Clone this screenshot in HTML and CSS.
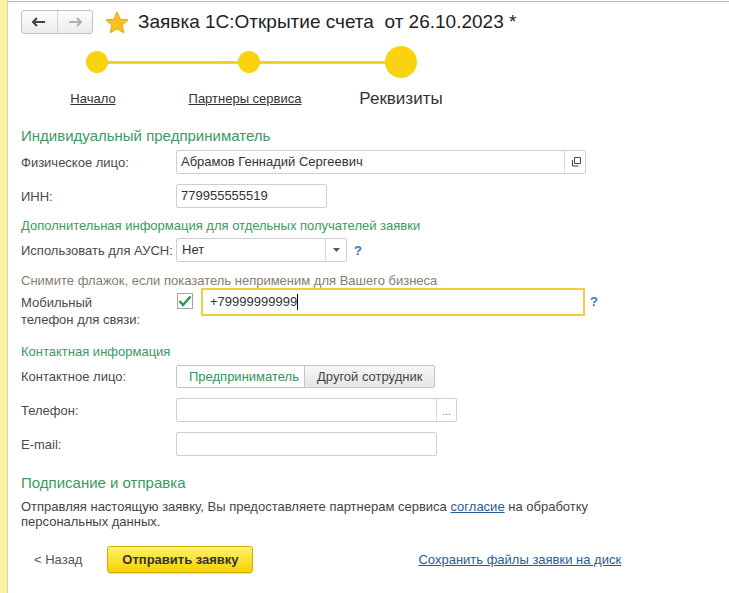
FILE: index.html
```html
<!DOCTYPE html>
<html lang="ru">
<head>
<meta charset="UTF-8">
<meta name="viewport" content="width=device-width, initial-scale=1.0">
<title>Заявка 1С:Открытие счета</title>
<link rel="stylesheet" href="styles.css">
</head>
<body>
<div class="page">
  <div class="strip"></div>
  <div class="main">
    <div class="topline"></div>
    <div class="content">

      <div class="header">
        <div class="nav">
          <span class="nav-btn">
            <svg width="14" height="10" viewBox="0 0 14 10"><path d="M1 5h12M5 1L1 5l4 4" stroke="#444" stroke-width="2" fill="none"/></svg>
          </span>
          <span class="nav-btn">
            <svg width="14" height="10" viewBox="0 0 14 10"><path d="M1 5h12M9 1l4 4-4 4" stroke="#b0b0b0" stroke-width="2" fill="none"/></svg>
          </span>
        </div>
        <svg class="star" width="24" height="23" viewBox="0 0 24 23"><path d="M12 1l3.2 7.2 7.8.7-5.9 5.2 1.8 7.7L12 17.8l-6.9 4 1.8-7.7L1 8.9l7.8-.7z" fill="#f6c21c" stroke="#e0a800" stroke-width="1"/></svg>
        <h1 class="title">Заявка 1С:Открытие счета&nbsp; от 26.10.2023 *</h1>
      </div>

      <div class="steps">
        <div class="step first">
          <span class="dot"></span>
          <a class="step-label" href="#">Начало</a>
        </div>
        <div class="step">
          <span class="dot"></span>
          <a class="step-label" href="#">Партнеры сервиса</a>
        </div>
        <div class="step last current">
          <span class="dot"></span>
          <span class="step-label">Реквизиты</span>
        </div>
      </div>

      <h2 class="section">Индивидуальный предприниматель</h2>

      <div class="row">
        <label class="label">Физическое лицо:</label>
        <div class="field w410">
          <span class="value">Абрамов Геннадий Сергеевич</span>
          <span class="field-btn">
            <svg width="11" height="11" viewBox="0 0 11 11"><path d="M4.5 .5h6v6h-6z M2.5 3v6h6" stroke="#444" fill="none"/></svg>
          </span>
        </div>
      </div>

      <div class="row">
        <label class="label">ИНН:</label>
        <div class="field w151"><span class="value">779955555519</span></div>
      </div>

      <h3 class="subsection">Дополнительная информация для отдельных получателей заявки</h3>

      <div class="row">
        <label class="label">Использовать для АУСН:</label>
        <div class="field w172 select">
          <span class="value">Нет</span>
          <span class="field-btn"><svg width="7" height="4" viewBox="0 0 7 4"><path d="M0 0h7L3.5 4z" fill="#555"/></svg></span>
        </div>
        <span class="help">?</span>
      </div>

      <p class="hint">Снимите флажок, если показатель неприменим для Вашего бизнеса</p>

      <div class="row mobile">
        <label class="label">Мобильный<br>телефон для связи:</label>
        <span class="check">
          <svg width="14" height="12" viewBox="0 0 14 12"><path d="M1.5 6l3.5 4L12.5 1.5" stroke="#22954f" stroke-width="2.4" fill="none"/></svg>
        </span>
        <div class="field focused">
          <span class="value">+79999999999</span><span class="caret"></span>
        </div>
        <span class="help">?</span>
      </div>

      <h3 class="subsection contact">Контактная информация</h3>

      <div class="row">
        <label class="label">Контактное лицо:</label>
        <div class="toggle">
          <span class="toggle-item on">Предприниматель</span>
          <span class="toggle-item">Другой сотрудник</span>
        </div>
      </div>

      <div class="row">
        <label class="label">Телефон:</label>
        <div class="field w282">
          <span class="value"></span>
          <span class="field-btn dots">...</span>
        </div>
      </div>

      <div class="row">
        <label class="label">E-mail:</label>
        <div class="field w261"><span class="value"></span></div>
      </div>

      <h2 class="section sign">Подписание и отправка</h2>
      <p class="text">Отправляя настоящую заявку, Вы предоставляете партнерам сервиса <a href="#">согласие</a> на обработку персональных данных.</p>

      <div class="actions">
        <a class="back" href="#">&lt; Назад</a>
        <button class="send" type="button">Отправить заявку</button>
        <a class="save" href="#">Сохранить файлы заявки на диск</a>
      </div>

    </div>
  </div>
</div>
</body>
</html>
```

FILE: styles.css
```css
/* Form page in 1C style */
body {
  margin: 0;
  font-family: "Liberation Sans", Arial, sans-serif;
  font-size: 13px;
  color: #4a4a4a;
  background: #fff;
}
.page {
  display: flex;
  min-height: 593px;
}
.strip {
  width: 7px;
  flex: none;
  background: #fcefa8;
  border-right: 1px solid #e6d788;
}
.main {
  flex: 1;
}
.topline {
  height: 1px;
  border-bottom: 1px solid #b9b9b9;
}
.content {
  padding: 8px 0 0 13px;
}

/* header */
.header {
  display: flex;
  align-items: center;
  height: 24px;
}
.nav {
  display: flex;
  width: 70px;
  height: 22px;
  border: 1px solid #c2c2c2;
  border-radius: 3px;
  background: linear-gradient(#fdfdfd, #ececec);
}
.nav-btn {
  flex: 1;
  display: flex;
  align-items: center;
  justify-content: center;
}
.nav-btn + .nav-btn {
  border-left: 1px solid #d0d0d0;
}
.star {
  margin-left: 12px;
}
.title {
  margin: 0 0 0 9px;
  font-size: 19px;
  font-weight: normal;
  color: #222;
}

/* steps */
.steps {
  display: flex;
  margin-top: 12px;
}
.step {
  position: relative;
  width: 152px;
  display: flex;
  flex-direction: column;
  align-items: center;
}
.step::before, .step::after {
  content: "";
  position: absolute;
  top: 15px;
  width: 50%;
  height: 3px;
  background: #f8d21a;
}
.step::before { left: 0; }
.step::after { right: 0; }
.step.first::before, .step.last::after {
  display: none;
}
.dot {
  position: relative;
  z-index: 1;
  width: 22px;
  height: 22px;
  margin: 5px 0;
  border-radius: 50%;
  background: #fad30f;
}
.current .dot {
  width: 32px;
  height: 32px;
  margin: 0;
}
.step-label {
  margin: 12px 8px 0 0;
  color: #333;
  line-height: 18px;
}
.current .step-label {
  margin: 12px 0 0 0;
  font-size: 17px;
  text-decoration: none;
}

/* sections */
.section {
  margin: 19px 0 0;
  font-size: 15px;
  font-weight: normal;
  line-height: 18px;
  color: #3b9962;
}
.subsection {
  margin: 10px 0 0;
  font-size: 13px;
  font-weight: normal;
  line-height: 16px;
  color: #3b9962;
}
.subsection.contact {
  margin-top: 16px;
}
.hint {
  margin: 11px 0 0;
  line-height: 16px;
  color: #877d6c;
}

/* rows */
.row {
  display: flex;
  align-items: center;
  margin-top: 10px;
}
.section + .row {
  margin-top: 5px;
}
.subsection + .row {
  margin-top: 4px;
}
.contact + .row {
  margin-top: 5px;
}
.label {
  width: 155px;
  flex: none;
  line-height: 17px;
}
.field {
  display: flex;
  height: 22px;
  border: 1px solid #cfcfcf;
  border-radius: 2px;
  background: #fff;
  box-sizing: content-box;
}
.value {
  flex: 1;
  padding: 0 4px;
  line-height: 22px;
  color: #333;
}
.field-btn {
  width: 20px;
  display: flex;
  align-items: center;
  justify-content: center;
  border-left: 1px solid #d9d9d9;
}
.field-btn.dots {
  align-items: flex-end;
  padding-bottom: 5px;
  box-sizing: border-box;
  font-size: 10px;
  line-height: 8px;
  color: #777;
}
.w410 { width: 408px; }
.w151 { width: 149px; }
.w172 { width: 169px; }
.w282 { width: 279px; }
.w261 { width: 259px; }
.select .value {
  padding-left: 5px;
}
.help {
  margin-left: 7px;
  font-weight: bold;
  color: #3677b0;
}

.row.mobile {
  align-items: flex-start;
  margin-top: -1px;
}
.mobile .label {
  padding-top: 6px;
}
.check {
  width: 14px;
  height: 14px;
  margin: 5px 0 0 1px;
  border: 1px solid #a5a5a5;
  display: flex;
  align-items: center;
  justify-content: center;
}
.field.focused {
  width: 380px;
  height: 24px;
  margin-left: 8px;
  border: 2px solid #f2cf3a;
  border-radius: 0;
  align-items: center;
}
.focused .value {
  flex: none;
  padding: 0 0 0 7px;
  line-height: 24px;
}
.caret {
  width: 1px;
  height: 16px;
  background: #000;
}
.mobile .help {
  margin: 6px 0 0 5px;
}

/* toggle */
.toggle {
  display: flex;
  height: 21px;
  border: 1px solid #c4c4c4;
  border-radius: 2px;
  overflow: hidden;
}
.toggle-item {
  padding: 0 12px;
  line-height: 21px;
  color: #444;
  background: linear-gradient(#f7f7f7, #e6e6e6);
}
.toggle-item.on {
  width: 103px;
  color: #2f955a;
  background: #fff;
  border-right: 1px solid #c4c4c4;
}

/* signing */
.section.sign {
  margin-top: 18px;
}
.text {
  margin: 7px 0 0;
  width: 620px;
  line-height: 15px;
  color: #444;
}
a {
  color: #333;
}
.text a, .save {
  color: #2b5c90;
}

.actions {
  display: flex;
  align-items: center;
  margin-top: 17px;
}
.back {
  margin-left: 13px;
  color: #555;
  text-decoration: none;
}
.send {
  margin-left: 25px;
  width: 146px;
  height: 27px;
  border: 1px solid #d2ad00;
  border-radius: 3px;
  background: linear-gradient(#fff26a, #f6d200);
  font-family: inherit;
  font-size: 13px;
  font-weight: bold;
  color: #333;
  box-shadow: 0 1px 1px rgba(0, 0, 0, 0.15);
}
.save {
  margin-left: 165px;
}
```
